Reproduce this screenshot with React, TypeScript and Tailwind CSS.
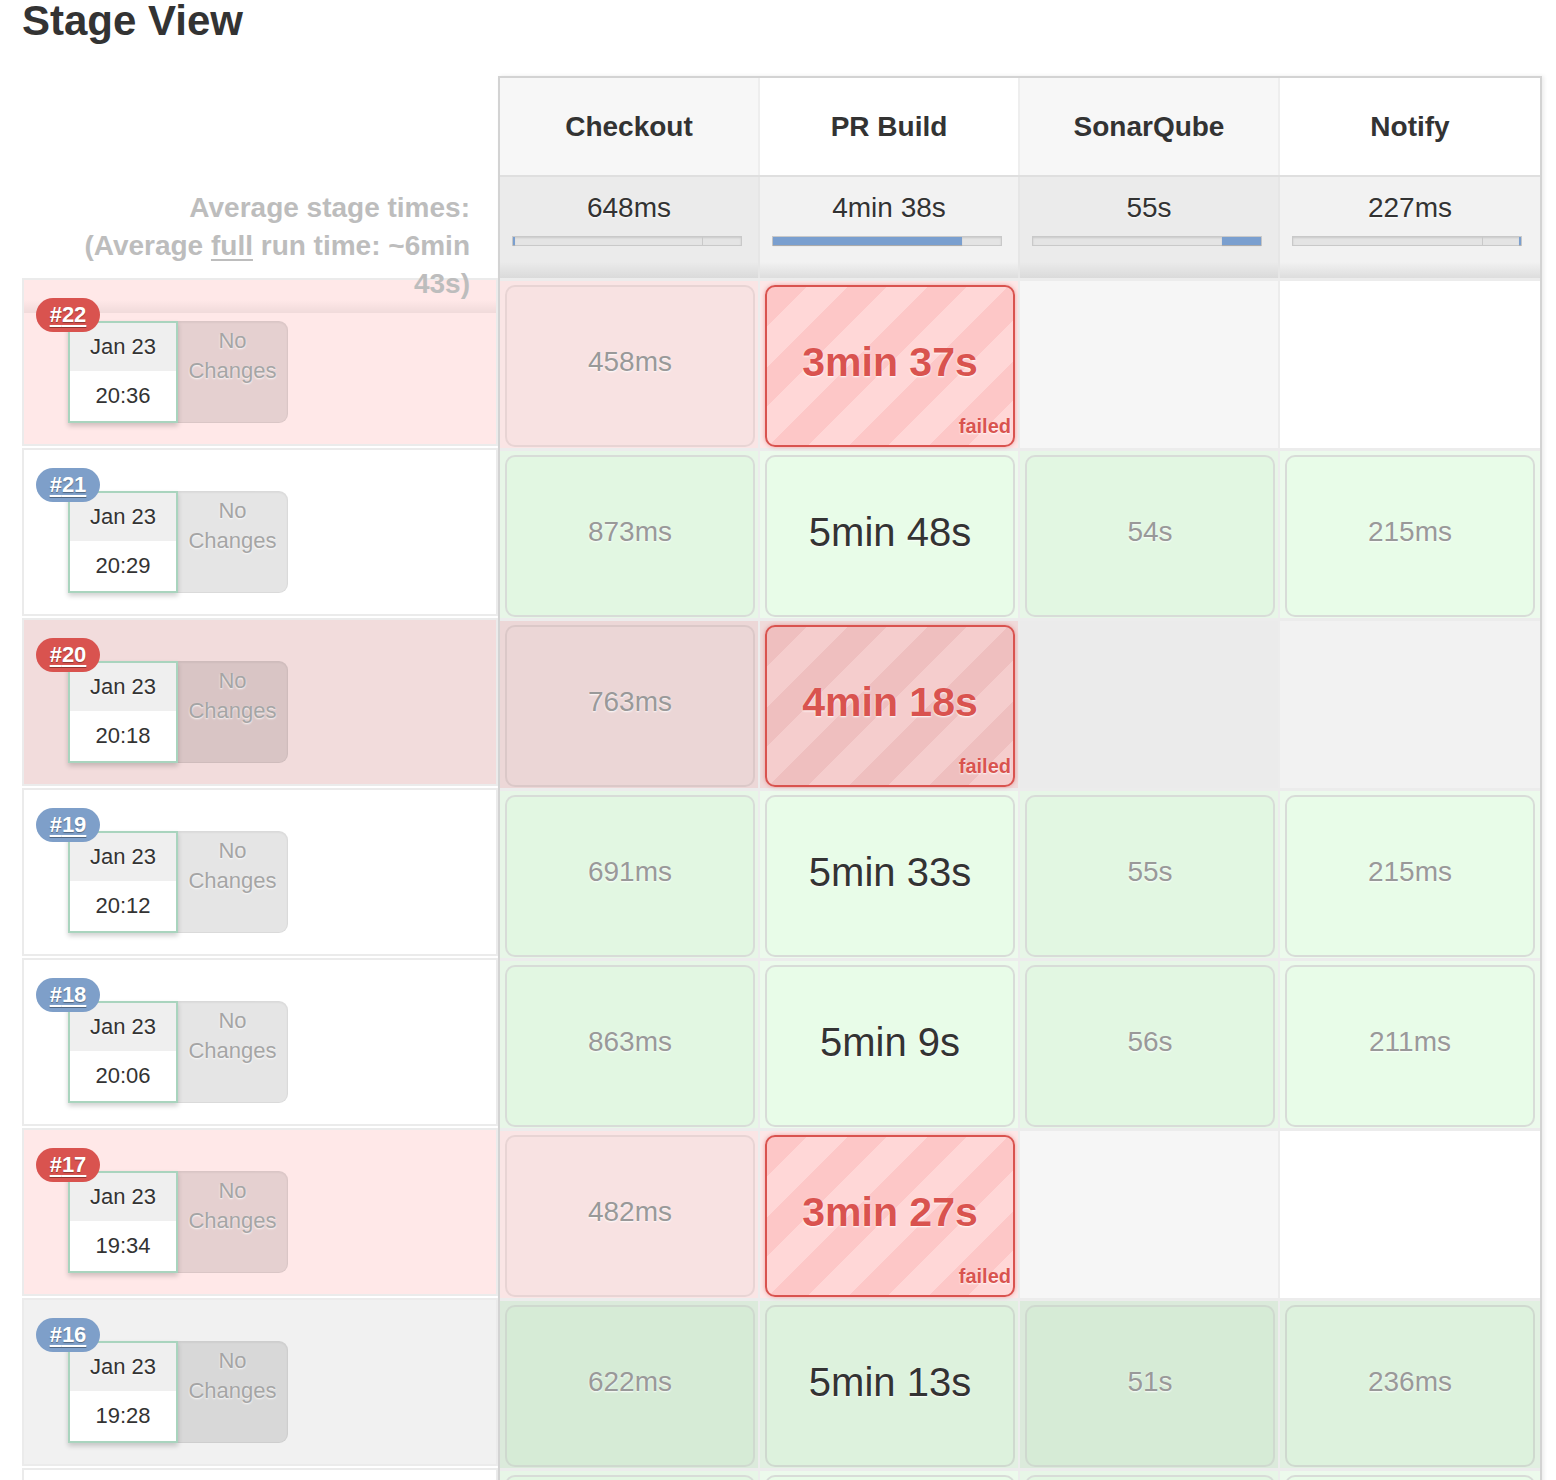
import React from "react";

type Row = {
  n: number;
  fail: boolean;
  dark: boolean;
  time: string;
  cells: (string | null)[];
  stub?: boolean;
};

const rows: Row[] = [
  { n: 22, fail: true, dark: false, time: "20:36", cells: ["458ms", "3min 37s", null, null] },
  { n: 21, fail: false, dark: false, time: "20:29", cells: ["873ms", "5min 48s", "54s", "215ms"] },
  { n: 20, fail: true, dark: true, time: "20:18", cells: ["763ms", "4min 18s", null, null] },
  { n: 19, fail: false, dark: false, time: "20:12", cells: ["691ms", "5min 33s", "55s", "215ms"] },
  { n: 18, fail: false, dark: false, time: "20:06", cells: ["863ms", "5min 9s", "56s", "211ms"] },
  { n: 17, fail: true, dark: false, time: "19:34", cells: ["482ms", "3min 27s", null, null] },
  { n: 16, fail: false, dark: true, time: "19:28", cells: ["622ms", "5min 13s", "51s", "236ms"] },
  { n: 15, fail: false, dark: false, time: "", cells: ["", "", "", ""], stub: true },
];

const stages = [
  { name: "Checkout", avg: "648ms", fillLeft: 0, fillWidth: 0.9, divider: 83 },
  { name: "PR Build", avg: "4min 38s", fillLeft: 0, fillWidth: 83, divider: null },
  { name: "SonarQube", avg: "55s", fillLeft: 83, fillWidth: 17, divider: null },
  { name: "Notify", avg: "227ms", fillLeft: 99.1, fillWidth: 0.9, divider: 83 },
];

const glow = "[text-shadow:0_1px_2px_rgba(255,255,255,0.95)]";

function leftBg(r: Row) {
  if (r.fail) return r.dark ? "bg-[#f2dcdc]" : "bg-[#ffe8e8]";
  return r.dark ? "bg-[#f1f1f1]" : "bg-white";
}

function colBg(r: Row, c: number) {
  const even = c % 2 === 0;
  if (r.fail) {
    if (c === 0) return r.dark ? "bg-[#ecd7d7]" : "bg-[#fae5e5]";
    if (c === 1) return r.dark ? "bg-[#f0dada]" : "bg-[#fde7e7]";
    if (c === 2) return r.dark ? "bg-[#ebebeb]" : "bg-[#f6f6f6]";
    return r.dark ? "bg-[#f2f2f2]" : "bg-white";
  }
  if (r.dark) return even ? "bg-[#dbeadb]" : "bg-[#e1f0e1]";
  return even ? "bg-[#e7f6e7]" : "bg-[#ecfaec]";
}

function Cell({ r, c }: { r: Row; c: number }) {
  const v = r.cells[c];
  if (v === null) return null;
  const even = c % 2 === 0;
  const big = v.includes("min");
  if (r.fail && big) {
    const stripes = r.dark
      ? "bg-[repeating-linear-gradient(135deg,#efbfbf_0px,#efbfbf_28px,#f5cdcd_28px,#f5cdcd_56.6px)]"
      : "bg-[repeating-linear-gradient(135deg,#fdc7c7_0px,#fdc7c7_28px,#ffd7d7_28px,#ffd7d7_56.6px)]";
    return (
      <div
        className={`relative flex h-[162px] w-[250px] items-center justify-center rounded-[10px] border-2 border-[#d9534f] shadow-[0_0_4px_rgba(217,83,79,0.45)] ${stripes}`}
      >
        <span className={`pb-[8px] text-[41px] font-bold leading-none text-[#d9534f] ${glow}`}>{v}</span>
        <span className={`absolute bottom-[9px] right-[2px] text-[20px] font-bold leading-none text-[#d9534f] ${glow}`}>
          failed
        </span>
      </div>
    );
  }
  let bg: string;
  let border: string;
  if (r.fail) {
    bg = r.dark ? "bg-[#ebd6d6]" : "bg-[#f8e2e2]";
    border = r.dark ? "border-[#dbc8c8]" : "border-[#e8d4d4]";
  } else if (r.dark) {
    bg = even ? "bg-[#d6ebd6]" : "bg-[#ddf2dd]";
    border = "border-[#cfd9cf]";
  } else {
    bg = even ? "bg-[#e2f7e2]" : "bg-[#e8fce8]";
    border = "border-[#d8dcd8]";
  }
  return (
    <div className={`flex h-[162px] w-[250px] items-center justify-center rounded-[10px] border-2 ${border} ${bg}`}>
      {v === "" ? null : big ? (
        <span className={`pb-[8px] text-[40px] leading-none text-[#333] ${glow}`}>{v}</span>
      ) : (
        <span className={`pb-[8px] text-[28px] leading-none text-[#999] ${glow}`}>{v}</span>
      )}
    </div>
  );
}

function LeftRow({ r, first }: { r: Row; first: boolean }) {
  if (r.stub) {
    return <div className={`mb-[2px] h-[168px] border-2 border-[#ebebeb] ${leftBg(r)}`} />;
  }
  return (
    <div className={`relative mb-[2px] h-[168px] border-2 border-[#ebebeb] pl-[44px] pt-[41px] ${leftBg(r)}`}>
      {first && (
        <div className="absolute inset-x-0 top-[20px] h-[13px] bg-[linear-gradient(to_bottom,rgba(0,0,0,0),rgba(0,0,0,0.06))]" />
      )}
      <span
        className={`absolute left-[12px] top-[18px] z-10 flex h-[34px] w-[64px] items-center justify-center rounded-full text-[22px] font-bold leading-none text-white underline decoration-2 underline-offset-[3px] [text-shadow:0_1px_1px_rgba(0,0,0,0.35)] ${
          r.fail ? "bg-[#d9534f]" : "bg-[#7e9fc9]"
        }`}
      >
        #{r.n}
      </span>
      <div className="relative flex">
        <div className="flex h-[102px] w-[110px] flex-col border-2 border-[#a9d4be] bg-white shadow-[0_3px_5px_rgba(0,0,0,0.18)]">
          <div className={`flex h-[48px] items-center justify-center bg-[#efefef] text-[22px] leading-none text-[#333] ${glow}`}>
            Jan 23
          </div>
          <div className="flex flex-1 items-center justify-center text-[22px] leading-none text-[#333]">{r.time}</div>
        </div>
        <div
          className={`h-[102px] w-[110px] rounded-r-[9px] border border-l-0 border-black/5 bg-black/10 pt-[4px] text-center text-[22px] leading-[30px] text-[#a5a5a5] shadow-[inset_0_1px_2px_rgba(0,0,0,0.05)] ${glow}`}
        >
          No
          <br />
          Changes
        </div>
      </div>
    </div>
  );
}

export default function App() {
  return (
    <div className="h-[1480px] overflow-hidden bg-white font-['Liberation_Sans',Arial,Helvetica,sans-serif] text-[#333]">
      <div className="pl-[22px]">
        <h1 className="h-[76px] text-[42px] font-bold leading-none text-[#333]">Stage View</h1>
        <div className="flex items-start">
          <div className="w-[476px] shrink-0">
            <div className="relative z-10 h-[202px] whitespace-nowrap pr-[28px] pt-[113px] text-right text-[28px] font-bold leading-[38px] text-[#bdbdbd]">
              Average stage times:
              <br />
              (Average <span className="underline decoration-2 underline-offset-[4px]">full</span> run time: ~6min
              <br />
              43s)
            </div>
            {rows.map((r, i) => (
              <LeftRow key={r.n} r={r} first={i === 0} />
            ))}
          </div>

          <div className="w-[1044px] shrink-0 border-x-2 border-t-2 border-[#d3d3d3] shadow-[2px_0_4px_rgba(0,0,0,0.08)]">
            <div className="flex h-[97px]">
              {stages.map((s, c) => (
                <div
                  key={s.name}
                  className={`flex w-[260px] items-center justify-center text-[28px] font-bold leading-none text-[#333] ${
                    c < 3 ? "border-r-2 border-[#eeeeee]" : ""
                  } ${c % 2 === 0 ? "bg-[#f7f7f7]" : "bg-white"}`}
                >
                  {s.name}
                </div>
              ))}
            </div>
            <div className="flex h-[103px] border-t-2 border-[#dfdfdf]">
              {stages.map((s, c) => (
                <div
                  key={s.name}
                  className={`flex w-[260px] flex-col ${c < 3 ? "border-r-2 border-[#e6e6e6]" : ""} ${
                    c % 2 === 0
                      ? "bg-[linear-gradient(to_bottom,#ebebeb_0%,#ebebeb_84%,#dadada_100%)]"
                      : "bg-[linear-gradient(to_bottom,#f2f2f2_0%,#f2f2f2_84%,#dddddd_100%)]"
                  }`}
                >
                  <div className={`pt-[14px] text-center text-[28px] leading-[34px] text-[#333] ${glow}`}>{s.avg}</div>
                  <div className="relative ml-[12px] mt-[11px] h-[10px] w-[230px] border border-[#c9c9c9] bg-[#e4e4e4] shadow-[inset_0_1px_2px_rgba(0,0,0,0.12)]">
                    {s.divider !== null && (
                      <div className="absolute inset-y-0 w-[1px] bg-[#c9c9c9]" style={{ left: `${s.divider}%` }} />
                    )}
                    <div
                      className="absolute inset-y-0 min-w-[2px] bg-[#7a9fcf] shadow-[0_1px_1px_rgba(0,0,0,0.15)]"
                      style={{ left: `${s.fillLeft}%`, width: `${s.fillWidth}%` }}
                    />
                  </div>
                </div>
              ))}
            </div>
            {rows.map((r) => (
              <div key={r.n} className="flex h-[170px] border-t-[3px] border-[#ececec]">
                {[0, 1, 2, 3].map((c) => (
                  <div
                    key={c}
                    className={`h-full w-[260px] pl-[5px] pt-[4px] ${c < 3 ? "border-r-2 border-[#ececec]" : ""} ${colBg(r, c)}`}
                  >
                    <Cell r={r} c={c} />
                  </div>
                ))}
              </div>
            ))}
          </div>
        </div>
      </div>
    </div>
  );
}
